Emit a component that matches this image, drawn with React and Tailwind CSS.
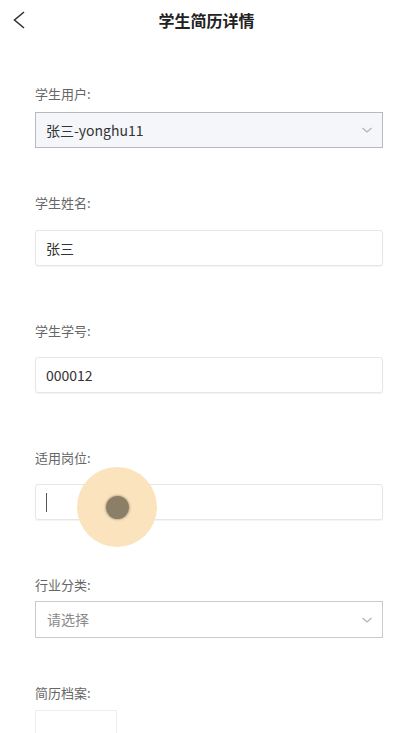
import React from 'react'

const font = { fontFamily: '"Noto Sans CJK SC", "Noto Sans", sans-serif' }

const Chevron = () => (
  <svg width="12" height="8" viewBox="0 0 12 8" fill="none" className="shrink-0">
    <path d="M1.5 2 L6 6 L10.5 2" stroke="#b0b0b0" strokeWidth="1.1" />
  </svg>
)

const Label = ({ text, className }) => (
  <div className={`h-5 leading-5 text-[13px] text-[#666666] ${className}`}>{text}</div>
)

const App = () => {
  return (
    <div className="w-[413px] h-[733px] overflow-hidden bg-white relative" style={font}>
      {/* header */}
      <div className="h-10 flex items-center justify-center relative">
        <button className="absolute left-[10px] top-[8px] p-0">
          <svg width="20" height="24" viewBox="0 0 20 24" fill="none">
            <path d="M14 4 L4.5 12 L14 20" stroke="#333" strokeWidth="1.6" strokeLinejoin="miter" />
          </svg>
        </button>
        <h1 className="text-[16px] font-bold text-[#222]">学生简历详情</h1>
      </div>

      <div className="pl-[35px] pr-[30px] flex flex-col">
        <Label text="学生用户:" className="mt-[44px]" />
        <div className="mt-2 h-9 border border-[#b9b9c0] bg-[#f4f6fa] flex items-center justify-between pl-[10px] pr-[9px]">
          <span className="text-[14px] text-[#333]">张三-yonghu11</span>
          <Chevron />
        </div>

        <Label text="学生姓名:" className="mt-[45px]" />
        <div className="mt-[17px] h-9 border border-[#e6e6e6] rounded-[3px] shadow-[0_1px_1px_rgba(0,0,0,0.05)] flex items-center pl-[10px]">
          <span className="text-[14px] text-[#333]">张三</span>
        </div>

        <Label text="学生学号:" className="mt-[55px]" />
        <div className="mt-4 h-9 border border-[#e6e6e6] rounded-[3px] shadow-[0_1px_1px_rgba(0,0,0,0.05)] flex items-center pl-[10px]">
          <span className="text-[14px] text-[#333]">000012</span>
        </div>

        <Label text="适用岗位:" className="mt-[55px]" />
        <div className="mt-4 h-9 border border-[#e6e6e6] rounded-[3px] shadow-[0_1px_1px_rgba(0,0,0,0.05)] flex items-center pl-[10px]">
          <span className="w-px h-[19px] bg-[#555]" />
        </div>

        <Label text="行业分类:" className="mt-[55px]" />
        <div className="mt-[6px] h-[37px] border border-[#cacaca] bg-white flex items-center justify-between pl-[11px] pr-[9px]">
          <span className="text-[14px] text-[#8a8a8a]">请选择</span>
          <Chevron />
        </div>

        <Label text="简历档案:" className="mt-[45px]" />
        <div className="mt-[7px] w-[82px] h-20 border border-[#eeeeee]" />
      </div>

      {/* touch indicator */}
      <div className="absolute left-[77px] top-[467px] w-20 h-20 rounded-full bg-[#fbe3bd] flex items-center justify-center">
        <div className="w-[23px] h-[23px] rounded-full bg-[#8c7f67] shadow-[0_0_2px_1px_rgba(140,127,103,0.5)]" />
      </div>
    </div>
  )
}

export default App
